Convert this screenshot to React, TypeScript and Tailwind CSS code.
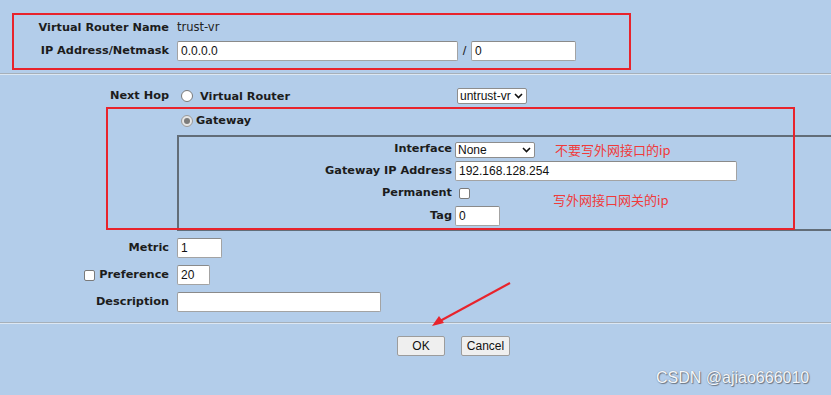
import React from "react";

const label = "font-['DejaVu_Sans',sans-serif] font-bold text-[11.3px] text-[#1c1c1c] whitespace-nowrap";
const field = "h-[20px] bg-white border border-[#a3a3a3] border-t-[#8a8a8a] rounded-[2px] px-[3px] flex items-center font-['Liberation_Sans',sans-serif] text-[12px] text-[#111]";

function Chevron() {
  return (
    <svg width="9" height="6" viewBox="0 0 9 6" className="ml-auto shrink-0">
      <path d="M1 1 L4.5 4.5 L8 1" fill="none" stroke="#111" strokeWidth="1.6" />
    </svg>
  );
}

function Select({ value, className }: { value: string; className: string }) {
  return (
    <div
      className={`h-[16px] bg-white border border-[#8d8d8d] rounded-[2px] pl-[2px] pr-[3px] flex items-center whitespace-nowrap overflow-hidden font-['Liberation_Sans',sans-serif] text-[12px] text-[#111] ${className}`}
    >
      <span>{value}</span>
      <Chevron />
    </div>
  );
}

function Radio({ checked }: { checked?: boolean }) {
  return (
    <span
      className={`w-[12px] h-[12px] rounded-full border flex items-center justify-center shrink-0 ${
        checked ? "border-[#9a9a9a] bg-[#e6e6e6]" : "border-[#7a7a7a] bg-white"
      }`}
    >
      {checked && <span className="w-[6px] h-[6px] rounded-full bg-[#7c7c7c]" />}
    </span>
  );
}

function Checkbox() {
  return <span className="block w-[11px] h-[11px] rounded-[2px] border border-[#7a7a7a] bg-white shrink-0" />;
}

function Divider() {
  return <div className="h-[2px] border-t border-[#a6b0ba] bg-[#dce7f3]" />;
}

export default function App() {
  return (
    <div className="relative w-[831px] h-[395px] overflow-hidden bg-[#b3cdea]">
      {/* top section */}
      <div className="pt-[20px]">
        <div className="flex items-center h-[16px]">
          <div className={`w-[169px] text-right ${label}`}>Virtual Router Name</div>
          <div className="ml-[8px] font-['DejaVu_Sans',sans-serif] text-[11.5px] text-[#222]">trust-vr</div>
        </div>
        <div className="flex items-center mt-[5px]">
          <div className={`w-[169px] text-right ${label}`}>IP Address/Netmask</div>
          <div className={`ml-[8px] w-[281px] ${field}`}>0.0.0.0</div>
          <span className="w-[13px] text-center font-['Liberation_Sans',sans-serif] text-[13px] text-[#222]">/</span>
          <div className={`w-[105px] ${field}`}>0</div>
        </div>
      </div>

      <div className="mt-[12px]">
        <Divider />
      </div>

      {/* next hop */}
      <div className="flex items-center h-[18px] mt-[12px]">
        <div className={`w-[169px] text-right ${label}`}>Next Hop</div>
        <div className="ml-[12px] flex items-center gap-[7px] w-[276px]">
          <Radio />
          <span className={`${label} mt-[2px]`}>Virtual Router</span>
        </div>
        <Select value="untrust-vr" className="w-[70px]" />
      </div>

      <div className="flex items-center h-[16px] mt-[8px] ml-[181px] gap-[3px]">
        <Radio checked />
        <span className={label}>Gateway</span>
      </div>

      {/* gateway box */}
      <div className="mt-[6px] ml-[177px] border-l-2 border-t-2 border-b-2 border-[#626d78] pt-[4px] pb-[3px] flex flex-col">
        <div className="flex items-center h-[17px]">
          <div className={`w-[273px] text-right ${label}`}>Interface</div>
          <Select value="None" className="ml-[3px] w-[80px]" />
          <span className="ml-[20px] font-['Noto_Sans_CJK_SC',sans-serif] text-[13px] text-[#f03a3a]">不要写外网接口的ip</span>
        </div>
        <div className="flex items-center mt-[3px]">
          <div className={`w-[273px] text-right ${label}`}>Gateway IP Address</div>
          <div className={`ml-[3px] w-[282px] ${field}`}>192.168.128.254</div>
        </div>
        <div className="flex items-center h-[14px] mt-[5px]">
          <div className={`w-[273px] text-right ${label}`}>Permanent</div>
          <span className="ml-[7px]">
            <Checkbox />
          </span>
        </div>
        <div className="flex items-center mt-[6px]">
          <div className={`w-[273px] text-right ${label}`}>Tag</div>
          <div className={`ml-[3px] w-[45px] ${field}`}>0</div>
        </div>
      </div>

      {/* metric etc */}
      <div className="flex flex-col gap-[7px] mt-[7px]">
        <div className="flex items-center">
          <div className={`w-[169px] text-right ${label}`}>Metric</div>
          <div className={`ml-[8px] w-[45px] ${field}`}>1</div>
        </div>
        <div className="flex items-center">
          <div className="w-[169px] flex items-center justify-end gap-[4px]">
            <Checkbox />
            <span className={label}>Preference</span>
          </div>
          <div className={`ml-[8px] w-[33px] ${field}`}>20</div>
        </div>
        <div className="flex items-center">
          <div className={`w-[169px] text-right ${label}`}>Description</div>
          <div className={`ml-[8px] w-[204px] ${field}`}></div>
        </div>
      </div>

      <div className="mt-[10px]">
        <Divider />
      </div>

      <div className="flex gap-[16px] mt-[12px] ml-[397px]">
        <button className="w-[48px] h-[20px] bg-[#efefef] border border-[#9c9c9c] rounded-[2px] font-['Liberation_Sans',sans-serif] text-[12px] text-[#111]">
          OK
        </button>
        <button className="w-[49px] h-[20px] bg-[#efefef] border border-[#9c9c9c] rounded-[2px] font-['Liberation_Sans',sans-serif] text-[12px] text-[#111]">
          Cancel
        </button>
      </div>

      {/* annotations */}
      <div className="absolute left-[12px] top-[13px] w-[619px] h-[57px] border-2 border-[#e8232c]" />
      <div className="absolute left-[106px] top-[107px] w-[689px] h-[123px] border-2 border-[#e8232c]" />
      <span className="absolute left-[553px] top-[190px] font-['Noto_Sans_CJK_SC',sans-serif] text-[13px] text-[#f03a3a]">写外网接口网关的ip</span>
      <svg className="absolute left-0 top-0" width="831" height="395">
        <line x1="510" y1="283" x2="440" y2="321" stroke="#e8232c" strokeWidth="2" />
        <polygon points="432,326 439,316 444,323" fill="#e8232c" />
      </svg>
      <span className="absolute left-[656px] top-[366px] font-['Liberation_Sans',sans-serif] text-[16px] text-[#f4f7fb] [text-shadow:0_0_1px_#6b7480,1px_1px_1px_#6b7480]">
        CSDN @ajiao666010
      </span>
    </div>
  );
}
